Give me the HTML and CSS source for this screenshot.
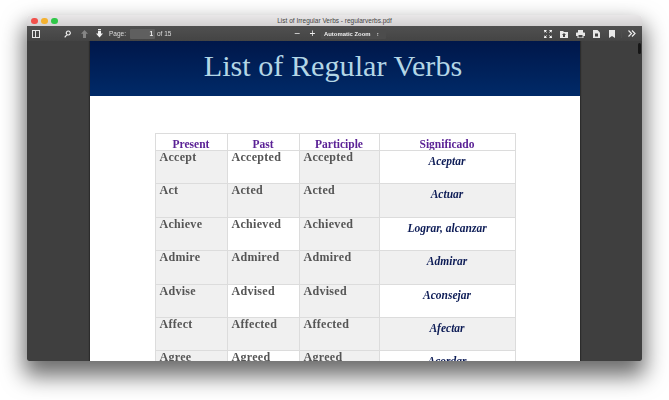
FILE: index.html
```html
<!DOCTYPE html>
<html lang="en">
<head>
<meta charset="utf-8">
<title>List of Irregular Verbs - regularverbs.pdf</title>
<link rel="stylesheet" href="styles.css">
</head>
<body>
<div class="window">
  <div class="titlebar">
    <div class="lights"><i class="light red"></i><i class="light yellow"></i><i class="light green"></i></div>
    <span class="title">List of Irregular Verbs - regularverbs.pdf</span>
  </div>
  <div class="toolbar">
    <div class="tool-left">
      <svg class="ico sidebar" width="8" height="8" viewBox="0 0 8 8"><path fill="#e8e8e8" fill-rule="evenodd" d="M0 0h8v8H0zM1 1v6h2V1zM4 1v6h3V1z"/></svg>
      <svg class="ico search" width="7" height="8" viewBox="0 0 7 8"><path fill="none" stroke="#eee" stroke-width="1.200" d="M4.300 1a2 2 0 1 1-.01 0zM3 4.700 .7 7.300"/></svg>
      <svg class="ico up" width="7" height="8" viewBox="0 0 7 8"><path fill="#858585" d="M3.500 0 7 3.800H5V8H2V3.800H0z"/></svg>
      <svg class="ico down" width="7" height="9" viewBox="0 0 7 9"><path fill="#f0f0f0" d="M2 0h3v1H2zM2 1.700h3v2.800h2L3.500 8.500 0 4.500h2z"/></svg>
      <span class="label">Page:</span>
      <span class="pagebox">1</span>
      <span class="label of">of 15</span>
    </div>
    <div class="tool-mid">
      <span class="zbtn">&#8722;</span>
      <span class="zbtn plus">+</span>
      <span class="zoomsel">Automatic Zoom<b class="caret">&#8597;</b></span>
    </div>
    <div class="tool-right">
      <svg class="ico" width="8" height="8" viewBox="0 0 8 8"><path fill="none" stroke="#eee" stroke-width="1.200" d="M0 2.600V.6h2.600M5.400.6H8v2M0 5.400v2h2.600M5.400 7.400H8v-2"/><path stroke="#eee" d="M1 1l1.500 1.500M7 1 5.500 2.500M1 7l1.500-1.500M7 7 5.500 5.500"/></svg>
      <svg class="ico" width="8" height="8" viewBox="0 0 8 8"><path fill="#e8e8e8" d="M0 1h3l1 1h4v6H0z"/><path fill="#444" d="M4 3 6 5H5v2H3V5H2z"/></svg>
      <svg class="ico" width="9" height="8" viewBox="0 0 9 8"><path fill="#e8e8e8" fill-rule="evenodd" d="M2 0h5v2.500h1.500L9 3v3H7.500v2h-6V6H0V3l.5-.5H2zM2.500 5v2.500h4V5z"/></svg>
      <svg class="ico" width="7" height="8" viewBox="0 0 7 8"><path fill="#e8e8e8" d="M0 0h4.500L7 2.500V8H0z"/><path fill="#444" d="M2 3.500h3V6.500H2z"/></svg>
      <svg class="ico bookmark" width="6" height="8" viewBox="0 0 6 8"><path fill="#e8e8e8" d="M0 0h6v8L3 6 0 8z"/></svg>
      <span class="sep"></span>
      <svg class="ico more" width="8" height="7" viewBox="0 0 8 7"><path fill="none" stroke="#eee" stroke-width="1.200" d="M.5.500 3.500 3.500.5 6.500M4 .500 7 3.500 4 6.500"/></svg>
    </div>
  </div>
  <div class="viewer">
    <div class="page">
      <h1 class="banner">List of Regular Verbs</h1>
      <table class="verbs">
        <colgroup><col class="c1"><col class="c2"><col class="c3"><col class="c4"></colgroup>
        <tr class="head"><th>Present</th><th>Past</th><th>Participle</th><th>Significado</th></tr>
        <tr class="odd"><td>Accept</td><td>Accepted</td><td>Accepted</td><td class="es">Aceptar</td></tr>
        <tr class="even"><td>Act</td><td>Acted</td><td>Acted</td><td class="es">Actuar</td></tr>
        <tr class="odd"><td>Achieve</td><td>Achieved</td><td>Achieved</td><td class="es">Lograr, alcanzar</td></tr>
        <tr class="even"><td>Admire</td><td>Admired</td><td>Admired</td><td class="es">Admirar</td></tr>
        <tr class="odd"><td>Advise</td><td>Advised</td><td>Advised</td><td class="es">Aconsejar</td></tr>
        <tr class="even"><td>Affect</td><td>Affected</td><td>Affected</td><td class="es">Afectar</td></tr>
        <tr class="odd"><td>Agree</td><td>Agreed</td><td>Agreed</td><td class="es">Acordar</td></tr>
      </table>
    </div>
    <div class="scrollthumb"></div>
  </div>
</div>
</body>
</html>
```
FILE: styles.css
```css
* { box-sizing: border-box; }
html, body { margin: 0; height: 100%; background: #fff; overflow: hidden; }
body { padding: 15px 27px 0; width: 669px; }
.window {
  width: 615px; height: 346px; display: flex; flex-direction: column; overflow: hidden;
  border-radius: 4px 4px 2px 2px;
  box-shadow: 0 12px 22px 3px rgba(0,0,0,.58);
  font-family: "Liberation Sans", Arial, sans-serif;
  filter: blur(.3px);
}
.titlebar {
  height: 11px; flex: none; position: relative; display: flex; align-items: center; justify-content: center;
  background: linear-gradient(#e9e7e8, #d3d1d2);
}
.lights { position: absolute; left: 4px; top: 2.500px; display: flex; gap: 3.500px; }
.light { width: 6.500px; height: 6.500px; border-radius: 50%; display: block; }
.red { background: #f2504b; }
.yellow { background: #f4b12f; }
.green { background: #2fc748; }
.title { font-size: 6.500px; color: #444; line-height: 11px; }
.toolbar {
  height: 15px; flex: none; display: flex; align-items: center; position: relative;
  background: linear-gradient(#505050, #444);
  color: #ddd; font-size: 6.500px;
}
.tool-left { display: flex; align-items: center; width: 263px; padding-left: 5px; }
.ico { flex: none; display: block; }
.search { margin-left: 24px; }
.up { margin-left: 10px; }
.down { margin-left: 8px; }
.label { margin-left: 6px; white-space: nowrap; color: #ddd; }
.pagebox {
  width: 25px; height: 10px; margin-left: 4px; background: #5f5f5f; border-radius: 1px;
  text-align: right; padding-right: 2px; line-height: 10px; color: #eee; font-weight: bold;
}
.of { margin-left: 2px; }
.tool-mid { display: flex; align-items: center; flex: none; }
.zbtn { font-size: 10px; line-height: 10px; color: #eee; width: 15px; text-align: center; }
.zoomsel {
  margin-left: 1px; height: 10px; width: 65px; line-height: 10px; padding-left: 3px; background: #4c4c4c;
  border-radius: 1px; color: #eee; white-space: nowrap; display: flex; font-weight: bold; font-size: 5.900px;
}
.caret { margin-left: 6px; font-size: 5px; font-weight: normal; }
.tool-right { margin-left: auto; display: flex; align-items: center; gap: 8px; padding-right: 6px; }
.bookmark { margin-left: 1.500px; }
.sep { width: 1px; height: 9px; background: #4d4d4d; margin: 0 -2px; }
.viewer {
  flex: 1; min-height: 0; background: #3f3f3f; position: relative; overflow: hidden;
  display: flex; justify-content: center;
}
.page { width: 490px; flex: none; background: #fff; box-shadow: -1px 0 1px rgba(0,0,0,.3), 1px 0 1px rgba(0,0,0,.3); height: 400px; }
.banner {
  margin: 0; height: 55px; padding-right: 3px; background: linear-gradient(#00174a, #002a68);
  color: #b3d6e6; font-family: "Liberation Serif", "Times New Roman", serif;
  font-weight: normal; font-size: 30.200px; line-height: 50px; text-align: center;
}
.verbs {
  margin: 37px 0 0 65px; width: 360px; table-layout: fixed; border-collapse: collapse;
  font-family: "Liberation Serif", "Times New Roman", serif;
}
.c1, .c2 { width: 72px; }
.c3 { width: 80px; }
.c4 { width: 136px; }
.verbs th, .verbs td { border: 1px solid #dcdcdc; padding: 0; vertical-align: top; }
.verbs .head th { height: 17px; padding: 5px 0 0; font-size: 11.500px; line-height: 11px; color: #5b2296; font-weight: bold; background: #fff; overflow: hidden; }
.verbs td { height: 33.400px; padding: 0 0 0 4px; font-size: 12px; line-height: 13px; font-weight: bold; color: #555; letter-spacing: .3px; }
.odd td, .even td { background: #f0f0f0; }
.odd td:nth-child(2), .odd td:nth-child(4) { background: #fff; }
.verbs td.es {
  font-style: italic; color: #0d1c56; text-align: center; padding: 4px 0 0; letter-spacing: 0; font-size: 11.500px;
  line-height: 13px;
}
.scrollthumb { position: absolute; right: 1px; top: 2px; width: 3px; height: 11px; background: #161616; border-radius: 2px; }
```
